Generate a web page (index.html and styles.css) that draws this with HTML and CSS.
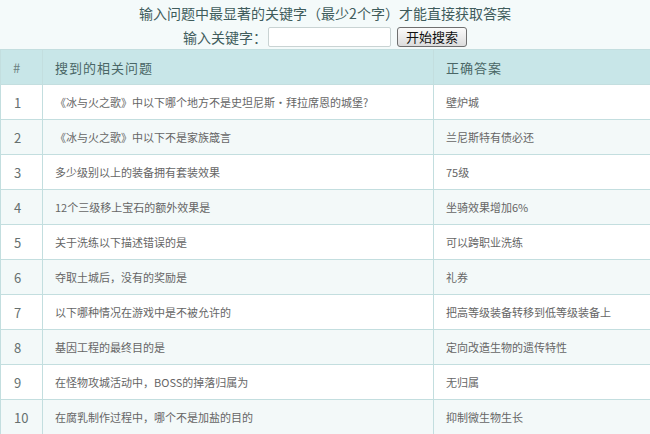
FILE: index.html
```html
<!DOCTYPE html>
<html lang="zh">
<head>
<meta charset="utf-8">
<link rel="stylesheet" href="styles.css">
</head>
<body>
<div class="top">
  <div class="title">输入问题中最显著的关键字（最少2个字）才能直接获取答案</div>
  <form class="search">
    <label class="label">输入关键字：</label>
    <input class="kw" type="text">
    <button class="btn" type="button">开始搜索</button>
  </form>
</div>
<table class="grid">
  <colgroup><col class="c1"><col class="c2"><col class="c3"></colgroup>
  <thead>
    <tr><th class="num">#</th><th>搜到的相关问题</th><th>正确答案</th></tr>
  </thead>
  <tbody>
    <tr><td class="num">1</td><td>《冰与火之歌》中以下哪个地方不是史坦尼斯·拜拉席恩的城堡?</td><td>壁炉城</td></tr>
    <tr><td class="num">2</td><td>《冰与火之歌》中以下不是家族箴言</td><td>兰尼斯特有债必还</td></tr>
    <tr><td class="num">3</td><td>多少级别以上的装备拥有套装效果</td><td>75级</td></tr>
    <tr><td class="num">4</td><td>12个三级移上宝石的额外效果是</td><td>坐骑效果增加6%</td></tr>
    <tr><td class="num">5</td><td>关于洗练以下描述错误的是</td><td>可以跨职业洗练</td></tr>
    <tr><td class="num">6</td><td>夺取土城后，没有的奖励是</td><td>礼券</td></tr>
    <tr><td class="num">7</td><td>以下哪种情况在游戏中是不被允许的</td><td>把高等级装备转移到低等级装备上</td></tr>
    <tr><td class="num">8</td><td>基因工程的最终目的是</td><td>定向改造生物的遗传特性</td></tr>
    <tr><td class="num">9</td><td>在怪物攻城活动中，BOSS的掉落归属为</td><td>无归属</td></tr>
    <tr><td class="num">10</td><td>在腐乳制作过程中，哪个不是加盐的目的</td><td>抑制微生物生长</td></tr>
  </tbody>
</table>
</body>
</html>
```

FILE: styles.css
```css
html, body {
  margin: 0;
  padding: 0;
  background: #f4fafa;
  font-family: "Noto Sans CJK SC", "Noto Sans", sans-serif;
}

.top {
  height: 49px;
  color: #3f5c5c;
}

.title {
  height: 25px;
  line-height: 26px;
  font-size: 14px;
  text-align: center;
}

.search {
  margin: 0;
  height: 24px;
  display: flex;
  justify-content: center;
  align-items: center;
}

.label {
  font-size: 14px;
  line-height: 20px;
  margin-right: 1px;
}

.kw {
  box-sizing: border-box;
  width: 123px;
  height: 20px;
  margin: 0;
  border: 1px solid #c9d3d3;
  background: #fff;
  border-radius: 2px;
}

.btn {
  box-sizing: border-box;
  width: 70px;
  height: 20px;
  margin: 0 0 0 6px;
  padding: 0;
  border: 1px solid #6f6f6f;
  border-radius: 3px;
  background: linear-gradient(#fbfbfb, #dcdcdc);
  font-family: "Noto Sans CJK SC", sans-serif;
  font-size: 13px;
  line-height: 16px;
  color: #111;
}

.grid {
  width: 650px;
  border-collapse: collapse;
  table-layout: fixed;
}

.c1 { width: 42px; }
.c2 { width: 391px; }
.c3 { width: 217px; }

.grid th, .grid td {
  border: 1px solid #c3dedf;
  height: 34px;
  padding: 0 0 0 12px;
  text-align: left;
  white-space: nowrap;
}

.grid th {
  background: #c8e6e8;
  font-weight: normal;
  font-size: 13px;
  color: #4a6666;
  letter-spacing: 1px;
}

.grid th.num {
  font-size: 13px;
  color: #6b8080;
}

.grid td {
  font-size: 11px;
  color: #666;
  background: #fff;
}

.grid tbody tr:nth-child(even) td {
  background: #f3f9f9;
}

.grid td.num {
  font-size: 13px;
  color: #66706f;
  padding-left: 13px;
}
```
